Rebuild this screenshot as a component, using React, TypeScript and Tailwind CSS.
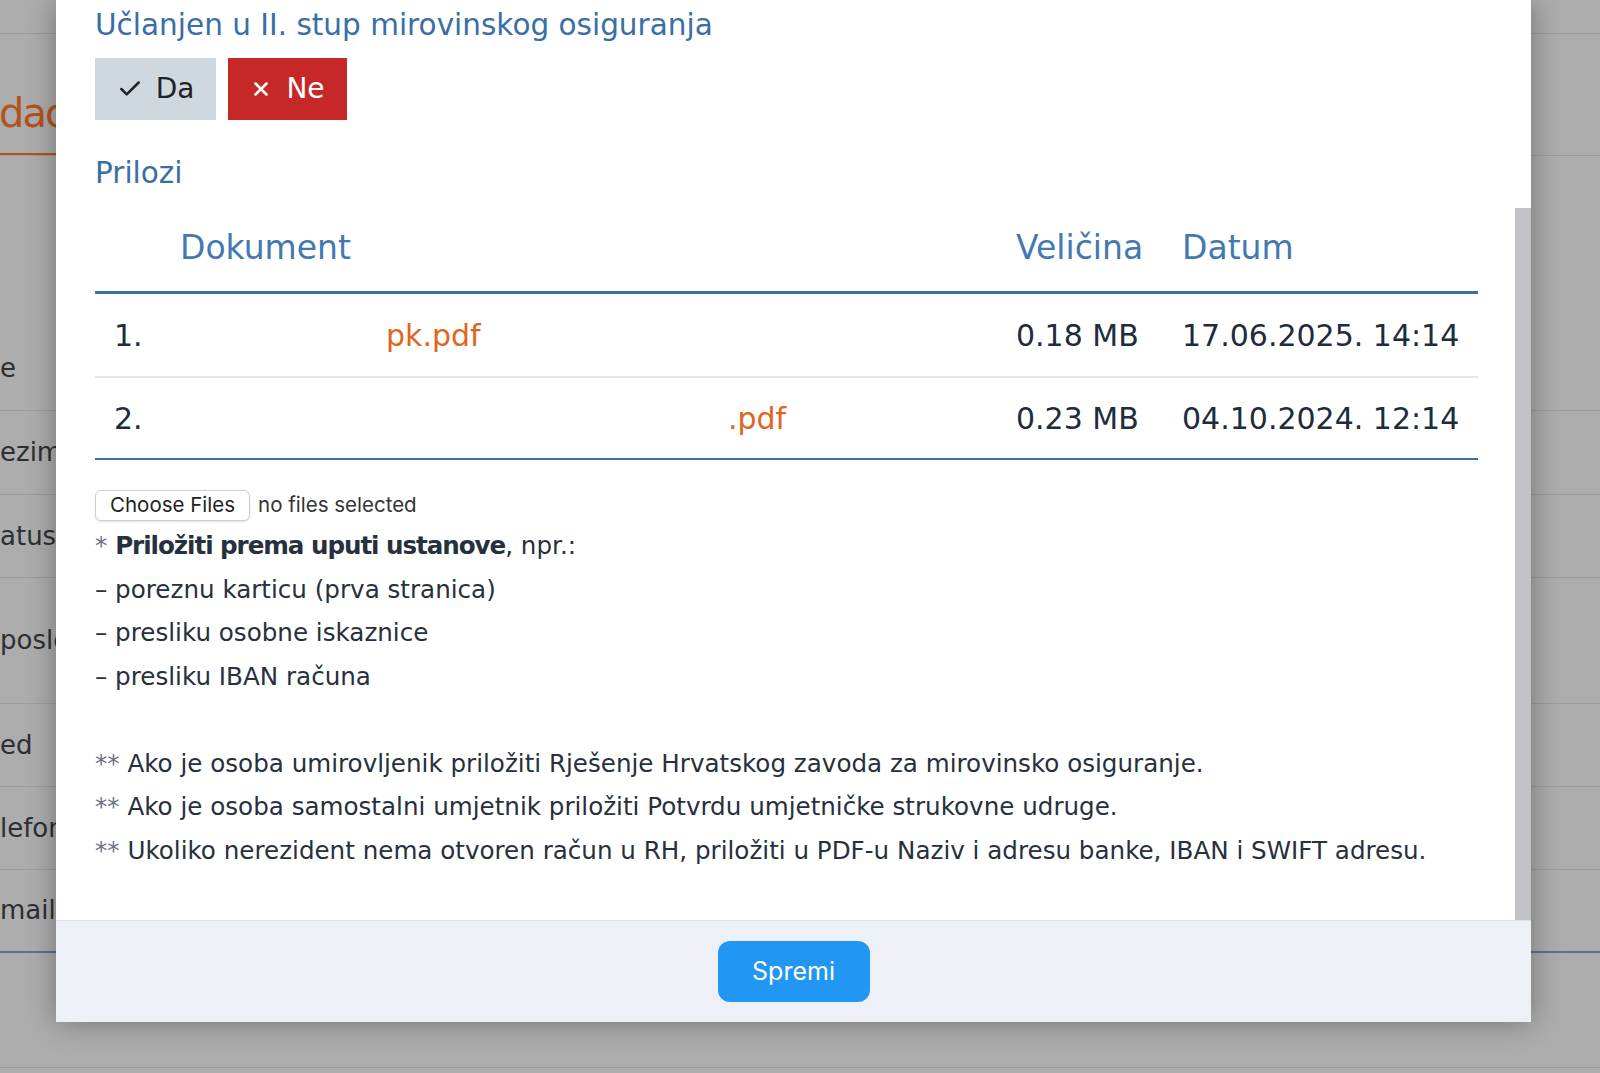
import { Check, X } from "lucide-react";

const rows = [
  { n: "1.", pad: "pl-[206px]", name: "pk.pdf", size: "0.18 MB", date: "17.06.2025. 14:14", h: "h-[84px]", border: "border-b-2 border-[#e4e6e8]" },
  { n: "2.", pad: "pl-[548px]", name: ".pdf", size: "0.23 MB", date: "04.10.2024. 12:14", h: "h-[82px]", border: "border-b-2 border-[#3e6fa3]" },
];

function BgRow({ label, h, extra }: { label: string; h: string; extra?: string }) {
  return (
    <div className={`${h} flex items-center border-b border-[#9c9c9c] ${extra ?? ""}`}>
      <span className="whitespace-nowrap">{label}</span>
    </div>
  );
}

export default function App() {
  return (
    <div className="relative h-[1073px] w-[1600px] overflow-hidden bg-[#adadad] font-['DejaVu_Sans',sans-serif]">
      {/* page behind the overlay */}
      <div className="flex flex-col text-[26px] text-[#2c2f33]">
        <div className="h-[34px] border-b border-[#9c9c9c]" />
        <div className="flex h-[122px] flex-col justify-end border-b border-[#9c9c9c]">
          <span className="-ml-[1px] mb-[20px] text-[40px] leading-[40px] tracking-[-2px] text-[#b4521b]">daci</span>
          <div className="h-[2px] w-[70px] bg-[#b4521b]" />
        </div>
        <div className="h-[171px]" />
        <BgRow label="e" h="h-[84px]" />
        <BgRow label="ezime" h="h-[84px]" />
        <BgRow label="atus" h="h-[83px]" />
        <BgRow label="poslen" h="h-[126px]" />
        <BgRow label="ed" h="h-[83px]" />
        <BgRow label="lefon" h="h-[83px]" />
        <div className="flex h-[83px] items-center border-b-2 border-[#5a7391]">
          <span className="whitespace-nowrap">mail</span>
        </div>
        <div className="h-[115px] border-b border-[#9c9c9c]" />
      </div>

      {/* modal */}
      <div className="absolute left-[56px] top-0 flex h-[1022px] w-[1475px] flex-col bg-white shadow-[0_0_28px_rgba(0,0,0,0.35)]">
        <div className="flex h-[920px] flex-row">
          <div className="w-[1459px] pl-[39px] pr-[37px] pt-[5px]">
            <div className="text-[29.5px] leading-[40px] text-[#3a6ea6]">Učlanjen u II. stup mirovinskog osiguranja</div>
            <div className="mt-[13px] flex gap-[12px]">
              <div className="flex h-[62px] w-[121px] items-center justify-center gap-[13px] bg-[#cfd8df] text-[28px] text-[#1f2328]">
                <Check size={26} strokeWidth={2.3} />
                <span>Da</span>
              </div>
              <div className="flex h-[62px] w-[119px] items-center justify-center gap-[14px] bg-[#c62828] text-[28px] text-white">
                <X size={22} strokeWidth={2.8} />
                <span>Ne</span>
              </div>
            </div>
            <div className="mt-[33px] text-[29.5px] leading-[40px] text-[#3a6ea6]">Prilozi</div>

            <div className="grid grid-cols-[85px_836px_166px_296px] border-b-[3px] border-[#3e6fa3] pb-[25px] pt-[36px] text-[33px] leading-[37px] text-[#4379b1]">
              <div />
              <div>Dokument</div>
              <div>Veličina</div>
              <div>Datum</div>
            </div>
            {rows.map((r) => (
              <div key={r.n} className={`grid grid-cols-[85px_836px_166px_296px] items-center ${r.h} ${r.border} text-[30px] text-[#202c3b]`}>
                <div className="pl-[19px]">{r.n}</div>
                <div className={`${r.pad} text-[#e1641f]`}>{r.name}</div>
                <div className="whitespace-nowrap">{r.size}</div>
                <div className="whitespace-nowrap">{r.date}</div>
              </div>
            ))}

            <div className="mt-[30px] flex h-[31px] items-center gap-[8px] font-['Inter',sans-serif] text-[20.5px] text-[#222]">
              <div className="flex h-[31px] items-center rounded-[6px] border border-[#cfcfcf] bg-white px-[14px] shadow-[0_1px_2px_rgba(0,0,0,0.12)]">
                Choose Files
              </div>
              <span className="text-[#333]">no files selected</span>
            </div>

            <div className="mt-[3px] text-[24.6px] leading-[43.5px] text-[#27303d]">
              <div>
                <span className="text-[#6b7380]">*</span> <b className="tracking-[-1.05px]">Priložiti prema uputi ustanove</b>, npr.:
              </div>
              <div>– poreznu karticu (prva stranica)</div>
              <div>– presliku osobne iskaznice</div>
              <div>– presliku IBAN računa</div>
              <div className="h-[43.5px]" />
              <div>
                <span className="text-[#6b7380]">**</span> Ako je osoba umirovljenik priložiti Rješenje Hrvatskog zavoda za mirovinsko osiguranje.
              </div>
              <div>
                <span className="text-[#6b7380]">**</span> Ako je osoba samostalni umjetnik priložiti Potvrdu umjetničke strukovne udruge.
              </div>
              <div>
                <span className="text-[#6b7380]">**</span> Ukoliko nerezident nema otvoren račun u RH, priložiti u PDF-u Naziv i adresu banke, IBAN i SWIFT adresu.
              </div>
            </div>
          </div>
          <div className="flex w-[16px] flex-col">
            <div className="mt-[208px] flex-1 bg-[#c0c2c6]" />
          </div>
        </div>
        <div className="flex flex-1 items-center justify-center border-t border-[#dde1e7] bg-[#edf1f7]">
          <div className="flex h-[61px] w-[152px] items-center justify-center rounded-[12px] bg-[#2196f3] font-['Inter',sans-serif] text-[25px] text-white">
            Spremi
          </div>
        </div>
      </div>
    </div>
  );
}
